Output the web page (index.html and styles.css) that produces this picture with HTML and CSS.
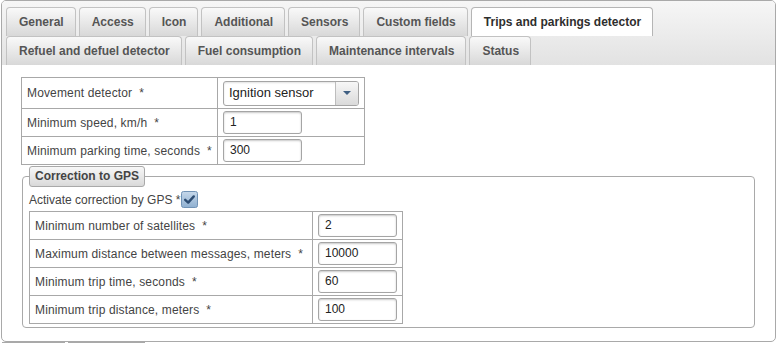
FILE: index.html
```html
<!DOCTYPE html>
<html>
<head>
<meta charset="utf-8">
<link rel="stylesheet" href="styles.css">
</head>
<body>
<div class="panel">
  <div class="tabbar">
    <div class="tab">General</div>
    <div class="tab">Access</div>
    <div class="tab">Icon</div>
    <div class="tab">Additional</div>
    <div class="tab">Sensors</div>
    <div class="tab">Custom fields</div>
    <div class="tab active">Trips and parkings detector</div>
    <div class="tab">Refuel and defuel detector</div>
    <div class="tab">Fuel consumption</div>
    <div class="tab">Maintenance intervals</div>
    <div class="tab">Status</div>
  </div>
  <div class="content">
    <table class="form t1">
      <tr>
        <td class="lbl">Movement detector&nbsp; *</td>
        <td class="val">
          <div class="select">
            <span class="sel-text">Ignition sensor</span>
            <span class="sel-btn"><span class="arrow"></span></span>
          </div>
        </td>
      </tr>
      <tr>
        <td class="lbl">Minimum speed, km/h&nbsp; *</td>
        <td class="val"><div class="input">1</div></td>
      </tr>
      <tr>
        <td class="lbl">Minimum parking time, seconds&nbsp; *</td>
        <td class="val"><div class="input">300</div></td>
      </tr>
    </table>
    <fieldset class="gps">
      <legend>Correction to GPS</legend>
      <div class="check-row">
        <span>Activate correction by GPS *</span>
        <span class="cb">
          <svg width="17" height="17" viewBox="0 0 17 17">
            <defs>
              <linearGradient id="cbg" x1="0" y1="0" x2="0" y2="1">
                <stop offset="0" stop-color="#c6d8ea"/>
                <stop offset="1" stop-color="#8fb0d1"/>
              </linearGradient>
            </defs>
            <rect x="0.5" y="0.5" width="16" height="16" rx="2" fill="url(#cbg)" stroke="#7193b6"/>
            <path d="M4.2 8.8 L7.2 11.6 L12.8 5.4" fill="none" stroke="#2d4d73" stroke-width="2.4" stroke-linecap="round" stroke-linejoin="round"/>
          </svg>
        </span>
      </div>
      <table class="form t2">
        <tr>
          <td class="lbl">Minimum number of satellites&nbsp; *</td>
          <td class="val"><div class="input">2</div></td>
        </tr>
        <tr>
          <td class="lbl">Maximum distance between messages, meters&nbsp; *</td>
          <td class="val"><div class="input">10000</div></td>
        </tr>
        <tr>
          <td class="lbl">Minimum trip time, seconds&nbsp; *</td>
          <td class="val"><div class="input">60</div></td>
        </tr>
        <tr>
          <td class="lbl">Minimum trip distance, meters&nbsp; *</td>
          <td class="val"><div class="input">100</div></td>
        </tr>
      </table>
    </fieldset>
  </div>
</div>
<div class="buttons">
  <div class="btn b1"></div>
  <div class="btn b2"></div>
</div>
</body>
</html>
```

FILE: styles.css
```css
html, body {
  margin: 0;
  padding: 0;
  overflow: hidden;
  background: #fff;
}
body {
  font-family: "Liberation Sans", Arial, sans-serif;
  font-size: 12px;
  color: #444;
}
.panel {
  box-sizing: border-box;
  margin-left: 1px;
  width: 775px;
  height: 342px;
  border: 1px solid #a9a9a9;
  border-radius: 5px;
  overflow: hidden;
  background: #fff;
}
.tabbar {
  display: flex;
  flex-wrap: wrap;
  padding: 6px 0 0 4px;
  background: linear-gradient(#f6f6f6, #e2e2e2);
}
.tab {
  box-sizing: border-box;
  height: 29px;
  line-height: 28px;
  padding: 0 11px 0 12px;
  margin-right: 3px;
  border: 1px solid #c2c2c2;
  border-bottom: none;
  border-radius: 4px 4px 0 0;
  background: linear-gradient(#f9f9f9, #d8d8d8);
  font-weight: bold;
  color: #555;
  white-space: nowrap;
}
.tab.active {
  background: #fff;
  color: #2e2e2e;
  border-color: #b5b5b5;
}
.content {
  padding: 12px 20px 0 19px;
}
table.form {
  border-collapse: collapse;
}
table.form td {
  border: 1px solid #a8a8a8;
  padding: 2px 5px;
  vertical-align: middle;
  white-space: nowrap;
}
table.form td.lbl {
  letter-spacing: 0.15px;
}
.t1 { width: 344px; }
.t1 td.lbl { width: 186px; }
.t2 { width: 374px; }
.t2 td.lbl { width: 272px; }
.t1 tr:first-child td { height: 26px; }
.input {
  box-sizing: border-box;
  width: 79px;
  height: 23px;
  line-height: 21px;
  padding: 0 6px;
  border: 1px solid #a5a5a5;
  border-radius: 3px;
  box-shadow: inset 0 1px 2px rgba(0,0,0,0.22);
  color: #222;
  background: #fff;
}
.select {
  box-sizing: border-box;
  display: flex;
  width: 136px;
  height: 25px;
  border: 1px solid #a5a5a5;
  border-radius: 3px;
  background: #fff;
  box-shadow: inset 0 1px 2px rgba(0,0,0,0.12);
  overflow: hidden;
}
.sel-text {
  flex: 1;
  line-height: 21px;
  padding-left: 5px;
  color: #222;
  font-size: 13px;
}
.sel-btn {
  width: 22px;
  border-left: 1px solid #bdbdbd;
  background: linear-gradient(#f7f7f7, #dadada);
  display: flex;
  align-items: center;
  justify-content: center;
}
.arrow {
  width: 0;
  height: 0;
  border-left: 4px solid transparent;
  border-right: 4px solid transparent;
  border-top: 4px solid #3f5f82;
}
fieldset.gps {
  margin: 1px 0 0 1px;
  padding: 0 6px 3px 6px;
  border: 1px solid #a9a9a9;
  border-radius: 4px;
  min-width: 0;
}
fieldset.gps legend {
  padding: 0 5px;
  margin-left: 0;
  height: 21px;
  box-sizing: border-box;
  line-height: 19px;
  border: 1px solid #a9a9a9;
  border-radius: 3px;
  background: linear-gradient(#f8f8f8, #d9d9d9);
  font-weight: bold;
  color: #444;
}
.check-row {
  display: flex;
  align-items: center;
  height: 19px;
  margin: 3px 0 2px 0;
  color: #444;
}
.cb {
  display: flex;
  margin-left: 1px;
}
.buttons {
  display: flex;
  gap: 3px;
  padding-left: 2px;
}
.btn {
  box-sizing: border-box;
  height: 1px;
  border-top: 1px solid #a9a9a9;
  background: #d9d9d9;
}
.b1 { width: 63px; }
.b2 { width: 77px; }
```
